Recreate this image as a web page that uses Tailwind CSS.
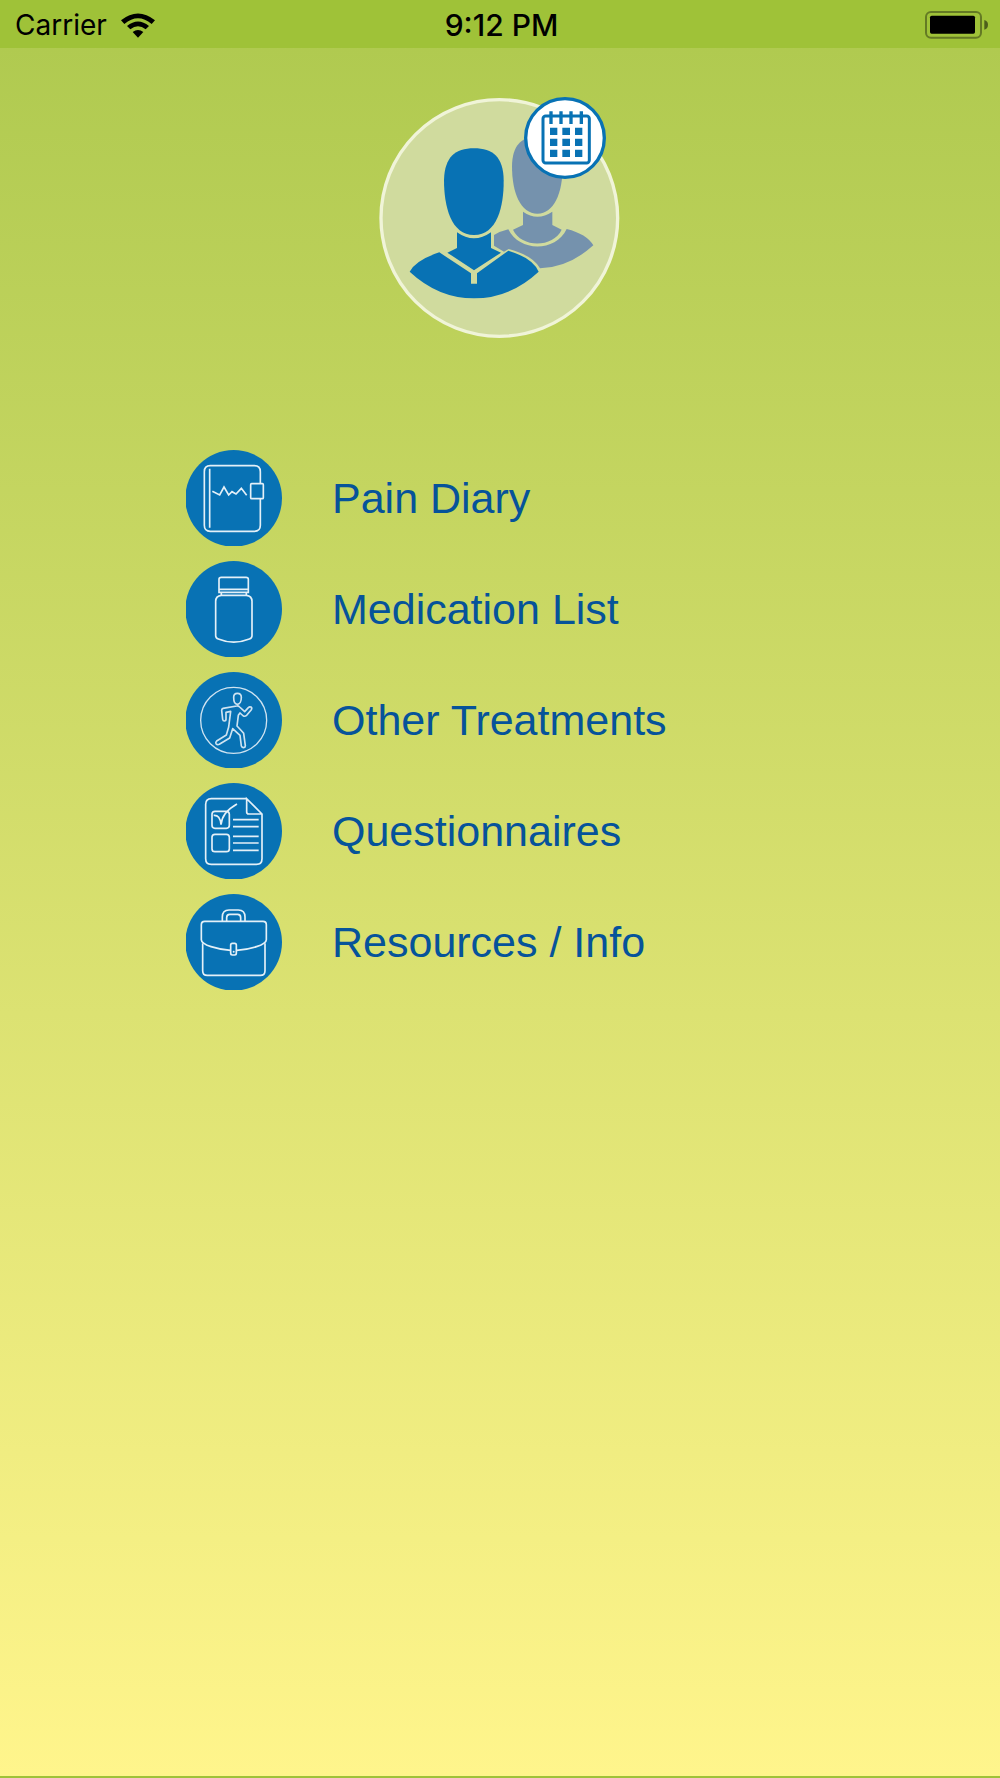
<!DOCTYPE html>
<html lang="en">
  <head>
    <meta charset="UTF-8" />
    <meta name="viewport" content="width=device-width, initial-scale=1.0" />
    <script src="https://cdn.jsdelivr.net/npm/@tailwindcss/browser@4"></script>
    <title>Pain Diary</title>
  </head>
  <body class="min-h-screen flex flex-col bg-[#9fc238] border-b-2 border-[#9fc238]">
    <!-- status bar -->
    <header class="grid grid-cols-3 items-center h-12 pl-[15px] pr-3 pt-[2px] text-[28px] leading-8 text-black font-['Inter',sans-serif]">
      <div class="flex items-center gap-[14px]">
        <span>Carrier</span>
        <svg class="w-[34px] h-[25px]" viewBox="362 35 102 75" aria-hidden="true">
          <path d="M362 57Q413 16 464 57L454 68Q413 34 372 68Z" />
          <path d="M380 74Q413 47 446 74L436 84Q413 66 390 84Z" />
          <path d="M397 92Q413 80 429 92L413 109Z" />
        </svg>
      </div>
      <p class="text-center text-[30px] font-medium">9:12 PM</p>
      <svg class="w-[63px] h-7 justify-self-end" viewBox="45 31 189 84" aria-hidden="true">
        <rect x="48" y="34" width="165" height="77" rx="15" fill="none" stroke="#647a24" stroke-width="6" />
        <rect x="60" y="45" width="135" height="54" rx="5" />
        <path d="M223 58Q234 61 234 72Q234 84 223 87Z" fill="#4d5e1b" />
      </svg>
    </header>

    <main class="grow flex flex-col items-center pt-[42px] bg-linear-to-b from-[#b0ca50] to-[#fff58c]">
      <!-- patients logo -->
      <svg class="w-[260px] h-[255px]" viewBox="0 0 780 765" role="img" aria-label="Patients and calendar">
        <circle cx="388" cy="384" r="355" fill="#d0db9e" stroke="#f0f4d8" stroke-width="10" />
        <g fill="#7592ad">
          <path d="M502 140C452 140 427 168 426 228C426 310 452 371 502 371C552 371 578 310 578 228C577 168 552 140 502 140Z" />
          <path d="M459 365Q502 395 547 365V405L575 419C550 473 455 475 429 419L459 405Z" />
          <path d="M372 435Q390 424 415 418C447 486 556 488 590 417Q650 432 670 466Q596 533 510 535Q490 497 416 477L402 485L372 467Z" />
        </g>
        <g fill="#0872b4">
          <path d="M312 175C255 175 224 202 222 270C222 350 243 435 312 435C381 435 402 350 401 270C400 202 369 175 312 175Z" />
          <path d="M261 427Q312 463 363 427V474L393 488L312 541L232 488L261 474Z" />
          <path d="M208 487L303 550V581H321V550L415 482Q488 504 506 545Q420 625 312 625Q205 625 119 545Q138 510 208 487Z" />
        </g>
        <circle cx="585" cy="144" r="118" fill="#fff" stroke="#0872b4" stroke-width="10" />
        <rect x="519" y="78" width="139" height="141" rx="8" fill="none" stroke="#0872b4" stroke-width="9" />
        <path d="M543 64V102M573 64V102M603 64V102M634 64V102" fill="none" stroke="#0872b4" stroke-width="10" />
        <path d="M540 124H562M577 124H600M615 124H637M540 157H562M577 157H600M615 157H637M540 190H562M577 190H600M615 190H637" fill="none" stroke="#0872b4" stroke-width="22" />
      </svg>

      <nav class="w-full pl-[18.6%] mt-[105px]">
        <ul class="flex flex-col gap-[15px] text-[43px] leading-[50px] text-[#06539a] font-['Liberation_Sans',Arial,sans-serif]">
          <li>
            <a href="#diary" class="flex items-center gap-[50px]">
              <svg class="size-24" viewBox="18 15 288 288" fill="none" stroke="#e4f0f8" stroke-width="5" aria-hidden="true">
                <circle cx="161" cy="160" r="145" fill="#0872b4" stroke="none" />
                <path d="M241 116V80Q241 62 223 62H91Q73 62 73 80V241Q73 259 91 259H223Q241 259 241 241V161M89 71V248" />
                <rect x="212" y="116" width="38" height="45" rx="3" />
                <path d="M97 139L119 150L132 126L146 150L156 140L168 147L184 130L200 151" />
              </svg>
              <span>Pain Diary</span>
            </a>
          </li>
          <li>
            <a href="#medication" class="flex items-center gap-[50px]">
              <svg class="size-24" viewBox="18 15 288 288" fill="none" stroke="#e4f0f8" stroke-width="5" aria-hidden="true">
                <circle cx="161" cy="160" r="145" fill="#0872b4" stroke="none" />
                <path d="M117 109V70Q117 64 124 64H198Q205 64 205 70V109ZM117 100H205M124 110V118M199 110V118" />
                <path d="M124 118H199Q216 120 216 136V239Q216 246 208 249Q161 268 115 249Q107 246 107 239V136Q107 120 124 118Z" />
              </svg>
              <span>Medication List</span>
            </a>
          </li>
          <li>
            <a href="#treatments" class="flex items-center gap-[50px]">
              <svg class="size-24" viewBox="18 15 288 288" fill="none" stroke="#cfe3f1" stroke-width="5" stroke-linejoin="round" aria-hidden="true">
                <circle cx="161" cy="160" r="145" fill="#0872b4" stroke="none" />
                <circle cx="161" cy="160" r="99" stroke-width="4" />
                <path d="M172 79C164 79 161 84 161 91C161 103 165 112 172 112C179 112 184 103 184 91C184 84 180 79 172 79Z" />
                <path d="M170 117L129 124Q125 125 125 130L128 157Q129 162 133 162Q138 162 138 157V136L152 133L146 180L139 204L110 222Q106 226 108 230Q112 235 118 232L149 213L158 185L180 205L184 237Q186 242 191 242Q196 241 196 236L191 199Q189 196 171 177L175 145L180 138L190 147Q195 149 200 145L214 128Q217 123 213 120Q208 118 205 122L194 134L179 120Q175 116 170 117Z" />
              </svg>
              <span>Other Treatments</span>
            </a>
          </li>
          <li>
            <a href="#questionnaires" class="flex items-center gap-[50px]">
              <svg class="size-24" viewBox="18 15 288 288" fill="none" stroke="#e4f0f8" stroke-width="5" aria-hidden="true">
                <circle cx="161" cy="160" r="145" fill="#0872b4" stroke="none" />
                <path d="M200 62H94Q77 62 77 79V242Q77 259 94 259H229Q246 259 246 242V108L200 62V102Q200 108 206 108H246" />
                <rect x="96" y="100" width="52" height="51" rx="9" />
                <rect x="96" y="169" width="52" height="52" rx="9" />
                <path d="M101 112Q120 110 123 140Q126 103 171 78M159 125H236M159 146H236M159 175H236M159 195H236M159 217H236" />
              </svg>
              <span>Questionnaires</span>
            </a>
          </li>
          <li>
            <a href="#resources" class="flex items-center gap-[50px]">
              <svg class="size-24" viewBox="18 15 288 288" fill="none" stroke="#e4f0f8" stroke-width="5" aria-hidden="true">
                <circle cx="161" cy="160" r="145" fill="#0872b4" stroke="none" />
                <path d="M127 97V84Q127 63 147 63H175Q195 63 195 84V97M140 97V86Q140 76 149 76H173Q182 76 182 86V97" />
                <path d="M152 184C112 181 64 168 64 152V107Q64 97 74 97H249Q259 97 259 107V152C259 168 210 181 170 184" />
                <path d="M68 163V245Q68 259 82 259H241Q255 259 255 245V163" />
                <rect x="152" y="163" width="17" height="35" rx="5" />
                <circle cx="161" cy="188" r="3" fill="#e4f0f8" stroke="none" />
              </svg>
              <span>Resources / Info</span>
            </a>
          </li>
        </ul>
      </nav>
    </main>
  </body>
</html>
